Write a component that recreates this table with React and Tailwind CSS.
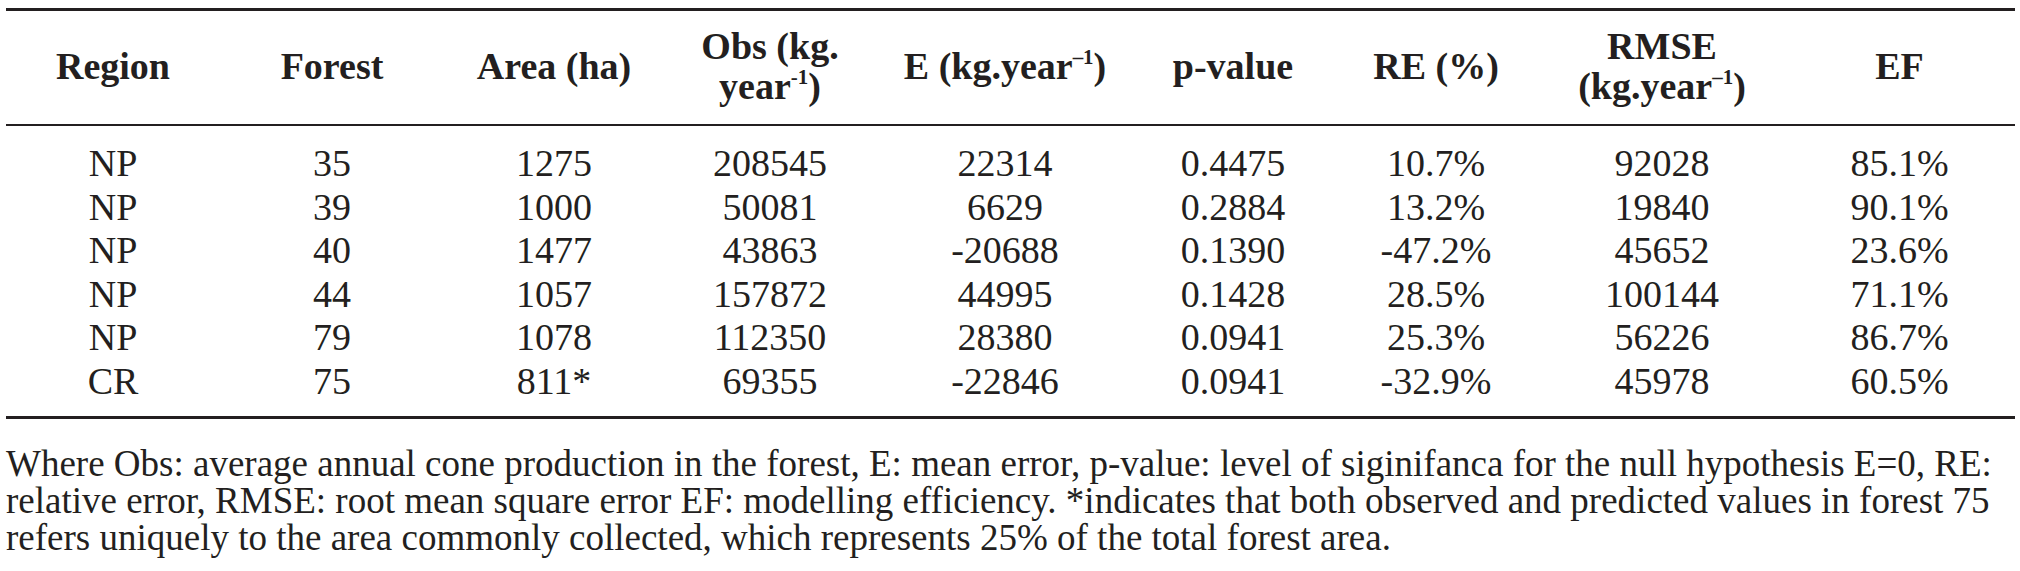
const rows = [
  ["NP", "35", "1275", "208545", "22314", "0.4475", "10.7%", "92028", "85.1%"],
  ["NP", "39", "1000", "50081", "6629", "0.2884", "13.2%", "19840", "90.1%"],
  ["NP", "40", "1477", "43863", "-20688", "0.1390", "-47.2%", "45652", "23.6%"],
  ["NP", "44", "1057", "157872", "44995", "0.1428", "28.5%", "100144", "71.1%"],
  ["NP", "79", "1078", "112350", "28380", "0.0941", "25.3%", "56226", "86.7%"],
  ["CR", "75", "811*", "69355", "-22846", "0.0941", "-32.9%", "45978", "60.5%"],
];

const cols = "grid grid-cols-[214px_224px_220px_212px_258px_198px_208px_244px_231px]";
const sup = "text-[0.55em] relative -top-[0.7em] leading-none";

export default function App() {
  return (
    <div
      className="w-[2020px] h-[571px] bg-white text-[#231f20]"
      style={{ fontFamily: "'Liberation Serif'" }}
    >
      <div className="pt-[8px] pl-[6px] w-[2015px]">
        <div className={cols + " h-[118px] pb-[4px] items-center border-t-[3px] border-b-2 border-[#231f20] text-[38px] font-bold leading-[40px] text-center"}>
          <div>Region</div>
          <div>Forest</div>
          <div>Area (ha)</div>
          <div>
            Obs (kg.
            <br />
            year<span className={sup}>-1</span>)
          </div>
          <div>
            E (kg.year<span className={sup}>–1</span>)
          </div>
          <div>p-value</div>
          <div>RE (%)</div>
          <div>
            RMSE
            <br />
            (kg.year<span className={sup}>–1</span>)
          </div>
          <div>EF</div>
        </div>
        <div className="pt-[16px] pb-[12px] border-b-[3px] border-[#231f20] text-[38px] leading-[43.6px]">
          {rows.map((r, ri) => (
            <div key={ri} className={cols + " text-center"}>
              {r.map((c, ci) => (
                <div key={ci}>{c}</div>
              ))}
            </div>
          ))}
        </div>
      </div>
      <p className="pl-[6px] pt-[26px] text-[37px] leading-[37px] whitespace-nowrap">
        Where Obs: average annual cone production in the forest, E: mean error, p-value: level of siginifanca for the null hypothesis E=0, RE:
        <br />
        relative error, RMSE: root mean square error EF: modelling efficiency. *indicates that both observed and predicted values in forest 75
        <br />
        refers uniquely to the area commonly collected, which represents 25% of the total forest area.
      </p>
    </div>
  );
}
